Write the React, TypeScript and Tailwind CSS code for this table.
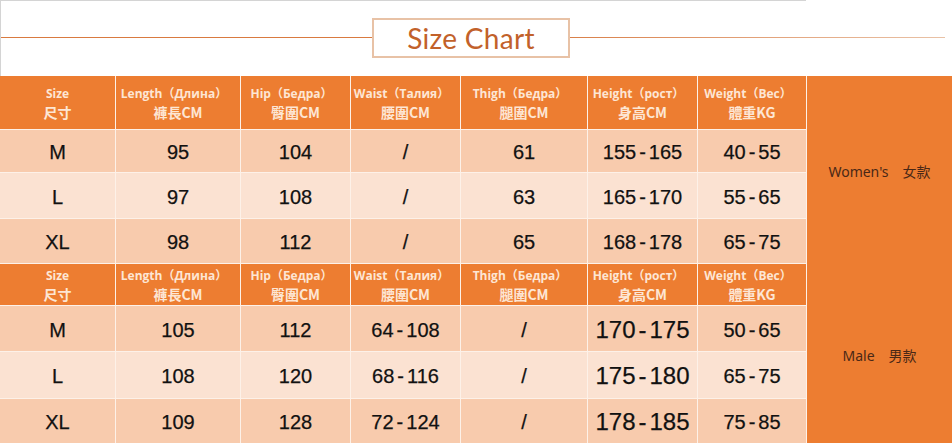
import React from "react";

type Row = {
  size: string;
  length: string;
  hip: string;
  waist: string;
  thigh: string;
  height: string;
  weight: string;
};

const headers = [
  { en: "Size", zh: "尺寸", pad: false },
  { en: "Length（Длина）", zh: "褲長CM", pad: true },
  { en: "Hip（Бедра）", zh: "臀圍CM", pad: true },
  { en: "Waist（Талия）", zh: "腰圍CM", pad: true },
  { en: "Thigh（Бедра）", zh: "腿圍CM", pad: true },
  { en: "Height（рост）", zh: "身高CM", pad: true },
  { en: "Weight（Вес）", zh: "體重KG", pad: true },
];

const women: Row[] = [
  { size: "M", length: "95", hip: "104", waist: "/", thigh: "61", height: "155-165", weight: "40-55" },
  { size: "L", length: "97", hip: "108", waist: "/", thigh: "63", height: "165-170", weight: "55-65" },
  { size: "XL", length: "98", hip: "112", waist: "/", thigh: "65", height: "168-178", weight: "65-75" },
];

const men: Row[] = [
  { size: "M", length: "105", hip: "112", waist: "64-108", thigh: "/", height: "170-175", weight: "50-65" },
  { size: "L", length: "108", hip: "120", waist: "68-116", thigh: "/", height: "175-180", weight: "65-75" },
  { size: "XL", length: "109", hip: "128", waist: "72-124", thigh: "/", height: "178-185", weight: "75-85" },
];

// spaced-out hyphen like the original chart
function Range({ value }: { value: string }) {
  const parts = value.split("-");
  if (parts.length < 2) return <>{value}</>;
  return (
    <>
      {parts[0]}
      <span className="px-[3px]">-</span>
      {parts[1]}
    </>
  );
}

function HeaderRow() {
  return (
    <>
      {headers.map((h) => (
        <div
          key={h.en}
          className="bg-[#ed7d31] flex flex-col items-center justify-center text-[#fde6d4] leading-[19px]"
        >
          <div
            className={`text-[12px] font-bold font-['Open_Sans','Noto_Sans_CJK_SC',sans-serif] whitespace-nowrap ${
              h.pad ? "pr-[8px]" : ""
            }`}
          >
            {h.en}
          </div>
          <div className="text-[14px] font-bold font-['Noto_Sans_CJK_TC',sans-serif]">
            {h.zh}
          </div>
        </div>
      ))}
    </>
  );
}

function DataRows({ rows, bigHeight }: { rows: Row[]; bigHeight?: boolean }) {
  return (
    <>
      {rows.map((r, i) => {
        const bg = i === 1 ? "bg-[#fbe2d2]" : "bg-[#f8cbad]";
        const cells = [r.size, r.length, r.hip, r.waist, r.thigh, r.height, r.weight];
        return cells.map((c, j) => (
          <div
            key={`${r.size}-${j}`}
            className={`${bg} flex items-center justify-center pt-[2px] text-[#111] [-webkit-text-stroke:0.25px_#111] font-['Liberation_Sans',Arial,sans-serif] ${
              bigHeight && j === 5 ? "text-[24px]" : "text-[20px]"
            }`}
          >
            <Range value={c} />
          </div>
        ));
      })}
    </>
  );
}

export default function App() {
  return (
    <div className="w-[952px] h-[447px] bg-white overflow-hidden">
      {/* title area */}
      <div className="w-[806px] h-[76px] border-t border-l border-[#d4d4d4]">
        <div className="w-[944px] h-full flex items-center pb-[2px]">
          <div className="w-[371px] h-px bg-[#d97a40]" />
          <div className="w-[198px] h-[40px] border-2 border-[#e8c2a6] flex items-center justify-center">
            <span className="text-[28px] text-[#c2612a] font-['Lato','Open_Sans',sans-serif] tracking-[0.3px]">
              Size Chart
            </span>
          </div>
          <div className="flex-1 h-px bg-gradient-to-r from-[#d98049] to-[#e9c2a6]" />
        </div>
      </div>

      {/* table */}
      <div className="grid grid-cols-[115px_124px_109px_109px_126px_109px_108px_145px] grid-rows-[53px_42px_45px_44px_41px_45px_46px_44px] gap-px bg-[#fdf1e8]">
        <HeaderRow />
        <div className="col-start-8 row-start-1 row-span-8 bg-[#ed7d31] flex flex-col text-[14px] text-[#4a2816] font-['Noto_Sans','Noto_Sans_CJK_SC',sans-serif]">
          <div className="h-[188px] flex items-center justify-center pt-[3px]">
            Women's<span className="ml-[14px]">女款</span>
          </div>
          <div className="flex-1 flex items-center justify-center pt-[4px]">
            Male<span className="ml-[14px]">男款</span>
          </div>
        </div>
        <DataRows rows={women} />
        <HeaderRow />
        <DataRows rows={men} bigHeight />
      </div>
    </div>
  );
}
